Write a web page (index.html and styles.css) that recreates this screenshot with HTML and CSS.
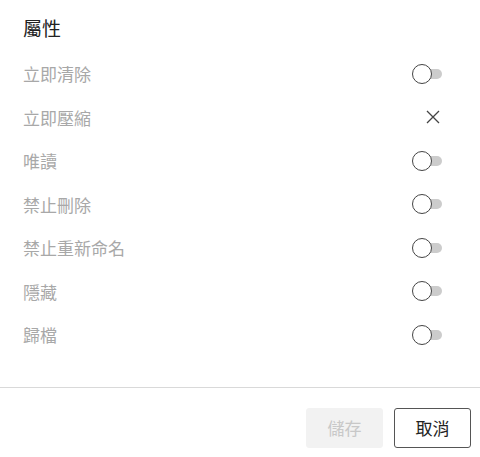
FILE: index.html
```html
<!DOCTYPE html>
<html lang="zh-Hant">
<head>
    <meta charset="UTF-8">
    <meta name="viewport" content="width=device-width, initial-scale=1.0">
    <title>屬性</title>
    <link rel="stylesheet" href="styles.css">
</head>
<body>
    <div class="dialog">
        <div class="content">
            <h2 class="title">屬性</h2>
            <ul class="props">
                <li class="prop"><span>立即清除</span><span class="switch"><span class="track"></span><span class="thumb"></span></span></li>
                <li class="prop"><span>立即壓縮</span><span class="close">
                    <svg width="14" height="14" viewBox="0 0 14 14"><path d="M1 1 L13 13 M13 1 L1 13" stroke="#444" stroke-width="1.3" fill="none"/></svg>
                </span></li>
                <li class="prop"><span>唯讀</span><span class="switch"><span class="track"></span><span class="thumb"></span></span></li>
                <li class="prop"><span>禁止刪除</span><span class="switch"><span class="track"></span><span class="thumb"></span></span></li>
                <li class="prop"><span>禁止重新命名</span><span class="switch"><span class="track"></span><span class="thumb"></span></span></li>
                <li class="prop"><span>隱藏</span><span class="switch"><span class="track"></span><span class="thumb"></span></span></li>
                <li class="prop"><span>歸檔</span><span class="switch"><span class="track"></span><span class="thumb"></span></span></li>
            </ul>
        </div>
        <div class="footer">
            <button class="btn btn-save" disabled>儲存</button>
            <button class="btn btn-cancel">取消</button>
        </div>
    </div>
</body>
</html>
```

FILE: styles.css
```css
body {
    margin: 0;
    padding: 0;
    background: #fff;
    font-family: "Noto Sans CJK TC", "Noto Sans", sans-serif;
}
.dialog {
    width: 480px;
}
.content {
    padding: 10px 38px 30px 23px;
}
.title {
    margin: 0 0 6px;
    font-size: 19px;
    font-weight: normal;
    line-height: 36px;
    color: #222;
}
.props {
    list-style: none;
    margin: 0;
    padding: 0;
}
.prop {
    display: flex;
    align-items: center;
    justify-content: space-between;
    height: 43.5px;
    font-size: 17px;
    color: #a8a8a8;
}
.switch {
    position: relative;
    width: 30px;
    height: 20px;
}
.track {
    position: absolute;
    left: 11px;
    top: 5px;
    width: 19px;
    height: 10px;
    border-radius: 5px;
    background: #ccc;
}
.thumb {
    position: absolute;
    left: 0;
    top: 0;
    width: 20px;
    height: 20px;
    box-sizing: border-box;
    border: 1px solid #444;
    border-radius: 50%;
    background: #fff;
}
.close {
    display: flex;
    width: 30px;
    justify-content: flex-end;
    padding-right: 2px;
    box-sizing: border-box;
}
.footer {
    display: flex;
    justify-content: flex-end;
    gap: 11px;
    padding: 20px 9px 9px;
    border-top: 1px solid #d9d9d9;
}
.btn {
    width: 77px;
    height: 40px;
    border-radius: 3px;
    font-family: inherit;
    font-size: 17px;
    cursor: pointer;
}
.btn-save {
    background: #f2f2f2;
    border: 1px solid #f2f2f2;
    color: #c8c8c8;
}
.btn-cancel {
    background: #fff;
    border: 1px solid #555;
    color: #222;
}
```
